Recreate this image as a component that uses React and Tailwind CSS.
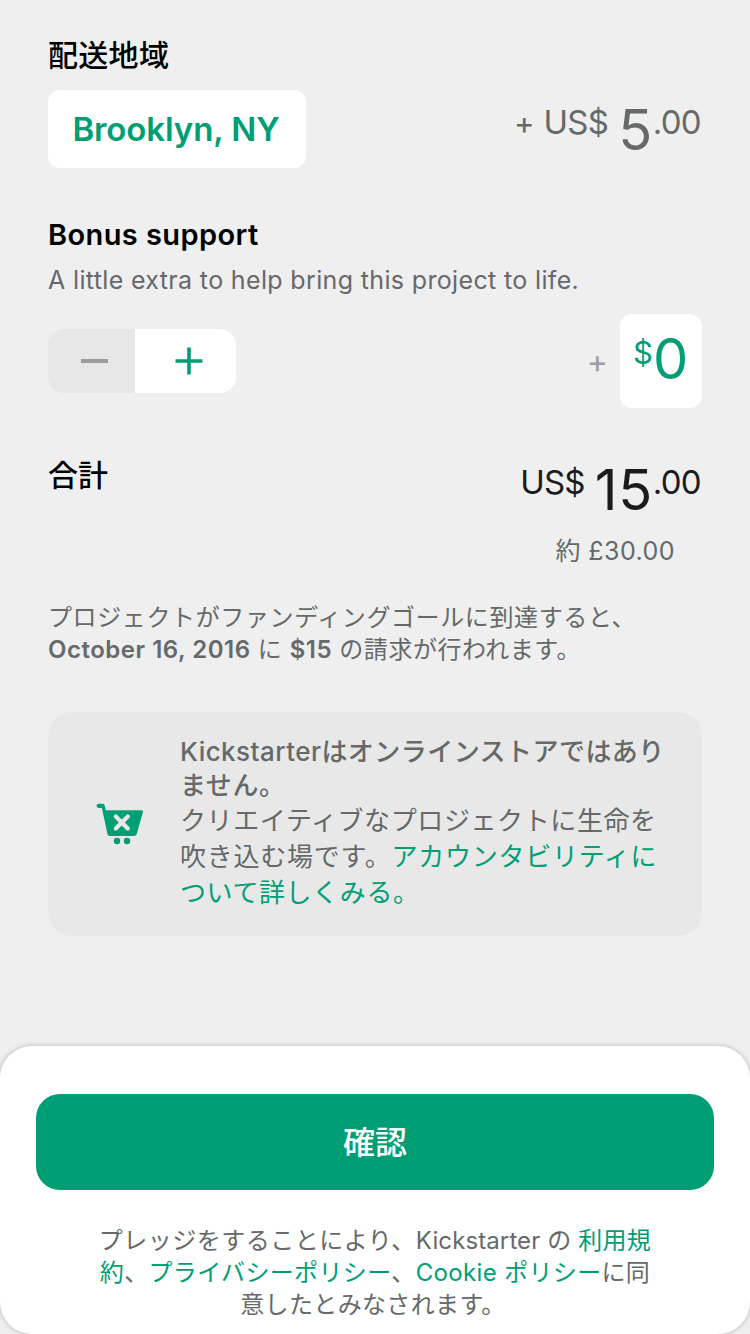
function Amount({ prefix, whole, cents }) {
  return (
    <div className="flex items-start pr-px">
      <span className="text-[33px] leading-[24px] tracking-[-0.8px]">{prefix}</span>
      <span className="text-[56px] leading-[40px] ml-[10px] tracking-[0.6px]">{whole}</span>
      <span className="text-[33px] leading-[24px] tracking-[-0.7px]">{cents}</span>
    </div>
  );
}

function CartIcon() {
  return (
    <svg className="w-[48px] h-[44px]" viewBox="0 0 48 44" fill="#009e74">
      <path d="M2.700 1.700H6.700Q8.300 1.700 8.700 3.500L9.700 8.200H45.500Q47.500 8.200 46.900 10.200L40.600 32.200Q40 34 38.200 34H13.500Q11.900 34 11.500 32.300L5.900 6H2.700A2.150 2.150 0 0 1 2.700 1.700Z" />
      <path d="M19.800 14.500L31.800 26.500M31.800 14.500L19.800 26.500" stroke="#e8e8e8" strokeWidth="4.200" strokeLinecap="round" />
      <circle cx="21" cy="39" r="3.200" />
      <circle cx="31" cy="39" r="3.200" />
    </svg>
  );
}

export default function App() {
  return (
    <div className="w-[750px] h-[1334px] overflow-hidden bg-[#efefef] flex flex-col font-['Inter','Noto_Sans_CJK_JP',sans-serif] text-[#656969] whitespace-nowrap">
      <main className="h-[1046px] px-12 pt-[37px] flex flex-col">
        <h2 className="h-[36px] text-[30px] leading-[36px] tracking-[0.3px] font-medium text-black">配送地域</h2>
        <div className="mt-[17px] flex justify-between items-start">
          <button className="w-[258px] h-[78px] rounded-xl bg-white text-[#009e74] text-[33px] tracking-[-0.1px] font-semibold pt-0.5 pr-0.5">Brooklyn, NY</button>
          <div className="mt-[20px] flex">
            <span className="text-[31px] leading-[26px] mr-[9px]">+</span>
            <Amount prefix="US$" whole="5" cents=".00" />
          </div>
        </div>

        <h2 className="mt-[49px] h-[36px] text-[29px] leading-[36px] tracking-[0.4px] font-semibold text-black">Bonus support</h2>
        <p className="mt-[10px] h-[34px] text-[25px] leading-[34px] tracking-[0.35px] text-[#67676d]">A little extra to help bring this project to life.</p>
        <div className="mt-[17px] h-[94px] flex items-center justify-between">
          <div className="w-[188px] h-[64px] rounded-2xl overflow-hidden flex">
            <button className="w-[87px] bg-[#e7e7e7] flex items-center pl-[33px]">
              <span className="w-[27px] h-1 bg-[#9b9c9c]" />
            </button>
            <button className="flex-1 bg-white pl-[40px] flex items-center">
              <svg className="w-[28px] h-[28px]" viewBox="0 0 28 28" stroke="#009e74" strokeWidth="3.600">
                <path d="M0.500 14H27.500M14 0.500V27.500" />
              </svg>
            </button>
          </div>
          <div className="flex items-center">
            <span className="text-[32px] leading-[28px] mr-[12px] pt-[2px] text-[#9b9e9e]">+</span>
            <div className="w-[82px] h-[94px] rounded-xl bg-white text-[#009e74] flex items-start pl-[13px] pt-[25px]">
              <span className="text-[31px] leading-[28px]">$</span>
              <span className="text-[56px] leading-[40px]">0</span>
            </div>
          </div>
        </div>

        <div className="mt-[48px] h-[72px] flex justify-between text-[#1b1b1b]">
          <h2 className="pt-px text-[30px] leading-[36px] font-medium text-black">合計</h2>
          <div className="mt-[14px]">
            <Amount prefix="US$" whole="15" cents=".00" />
          </div>
        </div>
        <p className="mt-[6px] h-[34px] pr-[27px] text-right text-[25px] leading-[34px] tracking-[0.45px]">約 £30.00</p>

        <div className="mt-[34px] text-[24px] leading-[32px]">
          <p className="h-[32px] tracking-[0.62px]">プロジェクトがファンディングゴールに到達すると、</p>
          <p className="h-[32px] tracking-[0.52px]"><b className="font-semibold">October 16, 2016</b> に <b className="font-semibold">$15</b> の請求が行われます。</p>
        </div>

        <section className="mt-[46px] h-[224px] rounded-[24px] bg-[#e8e8e8] flex">
          <div className="w-[132px] pl-[48px] pt-[90px]">
            <CartIcon />
          </div>
          <div className="pt-[23px] text-[26px] tracking-[0.6px]">
            <p className="h-[34px] leading-[34px] tracking-[0.45px] font-medium">Kickstarterはオンラインストアではあり</p>
            <p className="h-[34px] leading-[34px] font-medium">ません。</p>
            <p className="h-[36px] leading-[35px]">クリエイティブなプロジェクトに生命を</p>
            <p className="h-[36px] leading-[36px] tracking-[0.75px]">吹き込む場です。<a className="text-[#009e74]">アカウンタビリティに</a></p>
            <p className="h-[36px] leading-[36px] text-[#009e74]">ついて詳しくみる。</p>
          </div>
        </section>
      </main>

      <footer className="h-[288px] rounded-[32px] bg-white shadow-[0_0_5px_rgba(0,0,0,0.25)] px-9 pt-12">
        <button className="w-full h-[96px] rounded-[24px] bg-[#009e74] text-white text-[32px] font-medium pt-0.5">確認</button>
        <div className="mt-[35px] text-center text-[24px] leading-[32px] tracking-[0.35px]">
          <p className="h-[32px]"><span className="tracking-[0.5px]">プレッジをすることにより、</span><span className="tracking-[0.1px]">Kickstarter の </span><a className="text-[#009e74]">利用規</a></p>
          <p className="h-[32px]"><a className="text-[#009e74]">約</a>、<a className="text-[#009e74]">プライバシーポリシー</a>、<a className="text-[#009e74]">Cookie ポリシー</a>に同</p>
          <p className="h-[32px] pr-1">意したとみなされます。</p>
        </div>
      </footer>
    </div>
  );
}
